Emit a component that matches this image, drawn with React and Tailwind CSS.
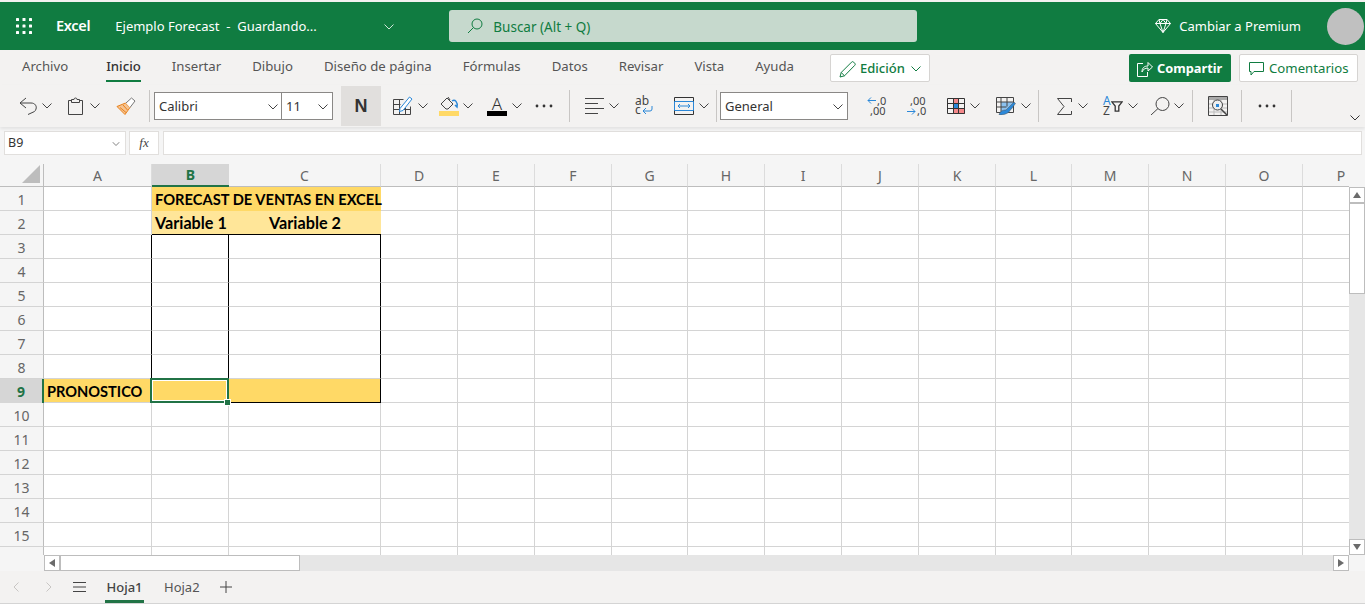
const columns = ["A", "B", "C", "D", "E", "F", "G", "H", "I", "J", "K", "L", "M", "N", "O", "P"];
const rows = [1, 2, 3, 4, 5, 6, 7, 8, 9, 10, 11, 12, 13, 14, 15, 16];
const tabs = ["Archivo", "Inicio", "Insertar", "Dibujo", "Diseño de página", "Fórmulas", "Datos", "Revisar", "Vista", "Ayuda"];

function Chevron({ className = "", color = "#444" }) {
  return (
    <svg width="10" height="6" viewBox="0 0 10 6" className={className} fill="none" stroke={color} strokeWidth="1">
      <path d="M0.5 0.5 5 5l4.500-4.500" />
    </svg>
  );
}

function Dots({ className = "" }) {
  return (
    <svg width="18" height="4" viewBox="0 0 18 4" className={className} fill="#333">
      <circle cx="2" cy="2" r="1.400" />
      <circle cx="9" cy="2" r="1.400" />
      <circle cx="16" cy="2" r="1.400" />
    </svg>
  );
}

function Sep({ className = "" }) {
  return <div className={`w-px h-8 bg-[#c8c6c4] ${className}`} />;
}

function Waffle() {
  const spots = [1.5, 8, 14.5];
  return (
    <svg width="16" height="16" viewBox="0 0 16 16" fill="#fff">
      {spots.map((y) => spots.map((x) => <rect key={`${x}-${y}`} x={x - 1.5} y={y - 1.5} width="3" height="3" rx="0.6" />))}
    </svg>
  );
}

function Icon({ children, w = 20, h = 20, className = "" }) {
  return (
    <svg width={w} height={h} viewBox={`0 0 ${w} ${h}`} fill="none" className={className}>
      {children}
    </svg>
  );
}

function Cell({ col, row }) {
  const inTable = col === "B" || col === "C";
  let cls = "bg-white";
  if (row === 1 && inTable) cls = "bg-[#ffd966]";
  if (row === 2 && inTable) cls = "bg-[#ffe699]";
  if (row === 9 && (col === "A" || inTable)) cls = "bg-[#ffd966]";

  let border = "border-r border-b border-[#d4d4d4]";
  if (row === 1 && col === "B") border = "border-b border-[#ffd966]";
  if (row === 1 && col === "C") border = "border-r border-b border-[#ffd966]";
  if (row === 2 && col === "B") border = "border-b border-black";
  if (row === 2 && col === "C") border = "border-b border-black";
  if (row > 2 && row < 9 && inTable) border = "border-r border-b border-r-black border-b-[#d4d4d4]";
  if (row === 9 && inTable) border = "border-r border-b border-black";
  if (row > 2 && row < 10 && col === "A") border = "border-r border-b border-r-black border-b-[#d4d4d4]";

  let text = null;
  if (row === 1 && col === "B") text = <span className="absolute left-[3px] top-[1px] whitespace-nowrap z-10 text-[14.7px]">FORECAST DE VENTAS EN EXCEL</span>;
  if (row === 2 && col === "B") text = <span className="absolute left-[3px] top-[1px] whitespace-nowrap text-[16.2px]">Variable 1</span>;
  if (row === 2 && col === "C") text = <span className="block text-center pt-[1px] whitespace-nowrap text-[16.2px]">Variable 2</span>;
  if (row === 9 && col === "A") text = <span className="absolute left-[3px] top-[2px] whitespace-nowrap text-[14.6px]">PRONOSTICO</span>;

  return (
    <div className={`relative h-6 ${cls} ${border} font-['Lato',sans-serif] font-bold leading-[22px] text-black`}>
      {text}
      {row === 9 && col === "B" && (
        <>
          <div className="absolute -left-[2px] -top-px -right-px -bottom-px border-2 border-[#217346] z-20">
            <div className="w-full h-full border border-white" />
          </div>
          <div className="absolute -right-[3px] -bottom-[4px] w-[7px] h-[7px] bg-[#217346] border border-white z-30" />
        </>
      )}
    </div>
  );
}

function Sheet() {
  return (
    <div className="w-[1349px] h-[391px] overflow-hidden">
      <div className="grid grid-cols-[44px_108px_77px_152px_77px_77px_77px_76px_77px_77px_77px_77px_76px_77px_77px_77px_77px] w-[1380px]">
        <div className="h-[23px] bg-[#f5f5f5] border-r border-b border-[#bdbdbd] flex items-end justify-end pr-[3px] pb-[3px]">
          <svg width="18" height="18" viewBox="0 0 18 18"><path d="M18 0v18H0z" fill="#bdbdbd" /></svg>
        </div>
        {columns.map((c) => (
          <div
            key={c}
            className={
              c === "B"
                ? "h-[23px] bg-[#d6d6d6] border-b-2 border-[#217346] flex items-center justify-center text-[14px] font-bold text-[#217346]"
                : "h-[23px] bg-[#f5f5f5] border-r border-b border-r-[#dcdcdc] border-b-[#bdbdbd] flex items-center justify-center text-[14px] text-[#666]"
            }
          >
            {c}
          </div>
        ))}
        {rows.map((r) => (
          <div key={r} className="contents">
            <div
              className={
                r === 9
                  ? "h-6 pt-[1px] bg-[#d6d6d6] border-r-2 border-[#217346] flex items-center justify-center text-[14px] font-bold text-[#217346]"
                  : "h-6 pt-[1px] bg-[#f5f5f5] border-r border-b border-r-[#bdbdbd] border-b-[#d4d4d4] flex items-center justify-center text-[14px] text-[#666]"
              }
            >
              {r}
            </div>
            {columns.map((c) => (
              <Cell key={c} col={c} row={r} />
            ))}
          </div>
        ))}
      </div>
    </div>
  );
}

function ScrollButton({ d, className = "" }) {
  return (
    <div className={`w-4 h-4 bg-white border border-[#bdbdbd] flex items-center justify-center ${className}`}>
      <svg width="10" height="10" viewBox="0 0 10 10"><path d={d} fill="#6b6b6b" /></svg>
    </div>
  );
}

export default function App() {
  return (
    <div className="w-[1365px] h-[607px] overflow-hidden bg-white font-['Noto_Sans',sans-serif] text-[#444]">
      <div className="h-[2px] bg-[#f3f2f1]" />

      {/* title bar */}
      <div className="h-[48px] bg-[#107c41] flex items-center text-white">
        <div className="ml-4"><Waffle /></div>
        <span className="ml-6 text-[14.5px] font-semibold tracking-[-0.3px]">Excel</span>
        <span className="ml-[25px] mt-[2px] w-[269px] text-[13px] whitespace-nowrap">Ejemplo Forecast&nbsp; -&nbsp; Guardando...</span>
        <Chevron color="#cfe5d8" className="mt-[2px]" />
        <div className="ml-[55px] w-[468px] h-8 rounded-[3px] bg-[#c6d9cd] flex items-center">
          <svg width="16" height="16" viewBox="0 0 16 16" fill="none" stroke="#107c41" strokeWidth="1" className="ml-[18px]">
            <circle cx="10" cy="6" r="5" />
            <path d="M6.500 9.500 1 15" />
          </svg>
          <span className="ml-[10px] mt-[2px] text-[13.5px] text-[#107c41]">Buscar (Alt + Q)</span>
        </div>
        <svg width="16" height="14" viewBox="0 0 16 14" fill="none" stroke="#fff" strokeWidth="1" className="ml-[238px]">
          <path d="M4 .5h8l3.500 4L8 13.500.5 4.500zM.5 4.500h15M5 4.500 8 13.500l3-9M4 .5l1 4 3-4 3 4 1-4" />
        </svg>
        <span className="ml-2 mt-[2px] w-[148px] text-[13px] whitespace-nowrap">Cambiar a Premium</span>
        <div className="w-[37px] h-[37px] rounded-full bg-[#c0c0c0]" />
      </div>

      {/* ribbon tabs */}
      <div className="h-[35px] bg-[#f3f2f1] flex items-center pl-[22px]">
        <div className="flex gap-[31px] w-[808px] pb-[1px]">
          {tabs.map((t) => (
            <div key={t} className={t === "Inicio" ? "relative ml-[7px] text-[13.2px] whitespace-nowrap text-[#333] font-medium" : "text-[13.2px] whitespace-nowrap text-[#555]"}>
              {t}
              {t === "Inicio" && <div className="absolute left-0 right-0 -bottom-[5px] h-[2px] bg-[#107c41]" />}
            </div>
          ))}
        </div>
        <div className="w-[100px] h-[28px] mt-[1px] pt-[2px] rounded-[2px] bg-white border border-[#d6d4d2] flex items-center pl-2 text-[13px] font-medium text-[#107c41]">
          <svg width="17" height="17" viewBox="0 0 17 17" fill="none" stroke="#107c41" strokeWidth="1">
            <path d="M1 16l1.200-4.500L12.500 1.200a1.500 1.500 0 0 1 2.200 0l1 1a1.500 1.500 0 0 1 0 2.200L5.500 14.800zM2.200 11.500l3.300 3.300" />
          </svg>
          <span className="ml-[4px]">Edición</span>
          <Chevron color="#107c41" className="ml-[6px]" />
        </div>
        <div className="ml-[199px] w-[102px] h-[28px] mt-[1px] pt-[2px] rounded-[2px] bg-[#107c41] flex items-center pl-2 text-[12.8px] font-bold text-white">
          <svg width="16" height="16" viewBox="0 0 16 16" fill="none" stroke="#fff" strokeWidth="1">
            <path d="M6 2.500H.5v13h10V11M5 11c0-4 2-6 6-6V1.500L15.500 6 11 10V7C8 7 6 8.500 5 11z" />
          </svg>
          <span className="ml-1">Compartir</span>
        </div>
        <div className="ml-2 w-[119px] h-[28px] mt-[1px] pt-[2px] rounded-[2px] bg-white border border-[#d6d4d2] flex items-center pl-[9px] text-[13.2px] text-[#107c41]">
          <svg width="15" height="14" viewBox="0 0 15 14" fill="none" stroke="#107c41" strokeWidth="1">
            <path d="M.5.500h14v9H5L2 13V9.500H.5z" />
          </svg>
          <span className="ml-[5px] whitespace-nowrap">Comentarios</span>
        </div>
      </div>

      {/* toolbar */}
      <div className="relative h-[42px] bg-[#f3f2f1] flex items-center pl-[19px] shadow-[0_2px_3px_rgba(0,0,0,0.08)]">
        <Icon w={18} h={18}>
          <path d="M7 1 1 6l6 5M1 6h11c4 0 6 3 5 6-.5 1.500-1 2-1.500 2.500L9 17.500" stroke="#444" />
        </Icon>
        <Chevron className="ml-[5px]" />
        <Icon w={16} h={18} className="ml-4">
          <path d="M3.500 3.500H.5v14h14v-14h-3M3.500 5.500v-3h2.500a1.500 1.500 0 0 1 3 0h2.500v3z" stroke="#444" />
        </Icon>
        <Chevron className="ml-[6px]" />
        <Icon w={20} h={18} className="ml-4">
          <path d="M1 9.500 9.500 6l4.500 4.500-5 7z" fill="#f6c391" stroke="#e8811a" />
          <path d="M4 10.500l6 5M7 8l4.500 5" stroke="#e8811a" />
          <path d="M10 6l5.500-5 3.500 3-5 6.500" stroke="#777" fill="#fff" />
        </Icon>
        <Sep className="ml-[13px]" />

        <div className="ml-1 w-[128px] h-7 pt-[2px] bg-white border border-[#8a8886] flex items-center justify-between pl-1 pr-[3px] text-[13px] text-[#333]">
          <span>Calibri</span>
          <Chevron />
        </div>
        <div className="w-[52px] h-7 pt-[2px] -ml-px bg-white border border-[#8a8886] flex items-center justify-between pl-1 pr-[4px] text-[13px] text-[#333]">
          <span>11</span>
          <Chevron />
        </div>
        <div className="ml-2 w-10 h-10 bg-[#e1dfdd] flex items-center justify-center font-['Liberation_Sans',sans-serif] font-bold text-[18px] text-[#333]">N</div>

        <Icon w={20} h={20} className="ml-[12px]">
          <path d="M.5 3.500h10M.5 3.500v15h17v-8M6.500 3.500v15M12.500 12v6.500M.5 8.500h7M.5 13.500h17" stroke="#444" />
          <path d="M7 12.500 16.500 1 19 3 10 14.500l-3.500 1z" fill="#fff" stroke="#2b88d8" />
        </Icon>
        <Chevron className="ml-[5px]" />
        <div className="ml-[11px] w-5 flex flex-col items-center">
          <Icon w={20} h={15}>
            <path d="M2 8 8 2l6 6-5 5H7zM9 1l2 3" stroke="#444" />
            <path d="M13 5c3-2 6 1 5 6l-2-2" stroke="#2b88d8" strokeWidth="1.500" />
          </Icon>
          <div className="w-5 h-[5px] bg-[#ffd966]" />
        </div>
        <Chevron className="ml-1" />
        <div className="ml-[14px] w-5 flex flex-col items-center">
          <span className="text-[17px] leading-[15px] font-light text-[#333]">A</span>
          <div className="w-5 h-[5px] bg-black" />
        </div>
        <Chevron className="ml-[5px]" />
        <Dots className="ml-[13px]" />
        <Sep className="ml-4" />

        <Icon w={20} h={18} className="ml-[15px]">
          <path d="M0 1.500h19M0 6.500h13M0 11.500h19M0 16.500h13" stroke="#444" />
        </Icon>
        <Chevron className="ml-1" />
        <div className="ml-[16px] w-[18px] h-[20px] relative text-[12px] leading-[9px] text-[#444]">
          <div>ab</div>
          <div>c</div>
          <svg width="11" height="9" viewBox="0 0 11 9" fill="none" stroke="#2b88d8" className="absolute right-0 bottom-[1px]">
            <path d="M10 0v3a2 2 0 0 1-2 2H1M4 2 1 5l3 3" />
          </svg>
        </div>
        <Icon w={20} h={18} className="ml-[21px]">
          <path d="M.5.500h19v17H.5zM.5 4.500h19M.5 13.500h19" stroke="#333" />
          <path d="M.5 4.500h19v9H.5zM4 9h12M6 7 4 9l2 2M14 7l2 2-2 2" stroke="#2b88d8" />
        </Icon>
        <Chevron className="ml-[5px]" />
        <Sep className="ml-[7px]" />

        <div className="ml-[3px] w-[128px] h-7 pt-[2px] bg-white border border-[#8a8886] flex items-center justify-between pl-1 pr-1 text-[13px] text-[#333]">
          <span>General</span>
          <Chevron />
        </div>
        <div className="ml-[19px] w-[20px] relative h-5 text-[11px] leading-[10px] text-[#444]">
          <div className="pl-[10px]">,0</div>
          <div className="pl-[3px]">,00</div>
          <svg width="9" height="7" viewBox="0 0 9 7" fill="none" stroke="#2b88d8" className="absolute left-0 top-[1px]">
            <path d="M9 3.500H1M4 .5l-3 3 3 3" />
          </svg>
        </div>
        <div className="ml-[20px] w-[20px] relative h-5 text-[11px] leading-[10px] text-[#444]">
          <div className="pl-[3px]">,00</div>
          <div className="pl-[10px]">,0</div>
          <svg width="9" height="7" viewBox="0 0 9 7" fill="none" stroke="#2b88d8" className="absolute left-0 bottom-[1px]">
            <path d="M0 3.500h8M5 .5l3 3-3 3" />
          </svg>
        </div>
        <Icon w={18} h={16} className="ml-[20px]">
          <path d="M6.500.5h5v5h-5zM6.500 10.500h11v5h-11z" fill="#f4888a" stroke="#d13438" />
          <path d="M6.500 5.500h5v5h-5z" fill="#2b88d8" />
          <path d="M.5.500h17v15H.5zM6.500.5v15M11.500.5v15M.5 5.500h17M.5 10.500h17" stroke="#333" />
        </Icon>
        <Chevron className="ml-[5px]" />
        <Icon w={20} h={18} className="ml-[16px]">
          <path d="M5 5h12v6l-6 4H5z" fill="#8cc2f0" />
          <path d="M.5.500h17v15H.5zM5 .5v15M11 .5v9M.5 5h17M.5 10h10" stroke="#444" />
          <path d="M3 18c1-4 4-5 7-5l8-8 1.500 1.500-7 9c-3 2-6 2.500-9.500 2.500z" fill="#2b88d8" stroke="#555" strokeWidth="0.5" />
        </Icon>
        <Chevron className="ml-[5px]" />
        <Sep className="ml-[7px]" />

        <Icon w={15} h={17} className="ml-[18px]">
          <path d="M14.500 4V.5H.5L7 8.500.5 16.500h14V13" stroke="#444" />
        </Icon>
        <Chevron className="ml-[6px]" />
        <div className="ml-[15px] w-[20px] h-[20px] relative text-[12px] leading-[10px]">
          <div className="text-[#2b88d8]">A</div>
          <div className="text-[#444]">Z</div>
          <svg width="12" height="11" viewBox="0 0 12 11" fill="none" stroke="#333" strokeWidth="1.300" className="absolute right-0 top-[5px]">
            <path d="M.8.800h10.400L7.800 5v5.200H4.200V5z" />
          </svg>
        </div>
        <Chevron className="ml-[5px]" />
        <Icon w={20} h={18} className="ml-[12px]">
          <circle cx="12.500" cy="7" r="6.500" stroke="#444" />
          <path d="M8 11.500 1 18" stroke="#444" />
        </Icon>
        <Chevron className="ml-1" />
        <Sep className="ml-2" />

        <Icon w={20} h={20} className="ml-[15px]">
          <path d="M.5.500h19v19H.5z" stroke="#444" />
          <path d="M1 1h18v3H1z" fill="#aaa" />
          <path d="M1 8h18M1 12h18M1 16h18M6 4v15M13 4v15" stroke="#bbb" />
          <circle cx="9.500" cy="9" r="5" fill="#eee" stroke="#444" />
          <path d="M13 13l6 6" stroke="#444" strokeWidth="1.500" />
          <path d="M8 8h3v3H8z" fill="#2b88d8" />
        </Icon>
        <Sep className="ml-[13px]" />
        <Dots className="ml-4" />
        <Sep className="ml-[15px]" />
        <Chevron className="absolute right-[5px] bottom-[6px]" color="#333" />
      </div>

      {/* formula bar */}
      <div className="h-[37px] bg-[#f5f5f5] flex items-center pl-1 pr-[3px] pb-[5px] gap-[3px]">
        <div className="w-[122px] h-[24px] pt-[1px] bg-white border border-[#e1dfdd] flex items-center justify-between pl-[3px] pr-[4px] text-[12.5px] text-[#333]">
          <span>B9</span>
          <Chevron className="scale-75" color="#555" />
        </div>
        <div className="w-[30px] h-[24px] bg-white border border-[#e1dfdd] flex items-center justify-center font-['Liberation_Serif',serif] italic text-[13px] text-[#444]">
          fx
        </div>
        <div className="ml-[1px] flex-1 h-[24px] bg-white border border-[#e1dfdd]" />
      </div>

      {/* grid + vertical scrollbar */}
      <div className="flex">
        <Sheet />
        <div className="w-4 flex flex-col h-[391px]">
          <div className="h-[23px] bg-[#f5f5f5] shrink-0" />
          <ScrollButton d="M5 2 9 8H1z" />
          <div className="h-[91px] bg-white border border-[#bdbdbd] shrink-0" />
          <div className="flex-1 bg-[#e6e6e6]" />
          <ScrollButton d="M1 2h8L5 8z" />
        </div>
      </div>

      {/* horizontal scrollbar */}
      <div className="h-4 flex bg-[#f5f5f5]">
        <div className="w-11" />
        <ScrollButton d="M8 1v8L2 5z" />
        <div className="w-[240px] bg-white border border-[#bdbdbd]" />
        <div className="w-[1033px] bg-[#e6e6e6]" />
        <ScrollButton d="M2 1v8l6-4z" />
      </div>

      {/* sheet tabs */}
      <div className="h-[33px] bg-[#f3f2f1] border-b border-[#d4d4d4] flex items-center text-[13px]">
        <svg width="6" height="10" viewBox="0 0 6 10" fill="none" stroke="#c8c6c4" className="ml-[13px]"><path d="M5.500.5 1 5l4.500 4.500" /></svg>
        <svg width="6" height="10" viewBox="0 0 6 10" fill="none" stroke="#c8c6c4" className="ml-[27px]"><path d="M.5.5 5 5 .5 9.500" /></svg>
        <svg width="13" height="10" viewBox="0 0 13 10" fill="none" stroke="#444" className="ml-[21px]"><path d="M0 .5h13M0 5h13M0 9.500h13" /></svg>
        <div className="relative ml-[19px] h-full pt-[2px] flex items-center justify-center w-[39px] font-medium text-[#444]">
          Hoja1
          <div className="absolute left-0 right-0 bottom-0 h-[3px] bg-[#217346]" />
        </div>
        <span className="ml-5 mt-[2px] text-[#555]">Hoja2</span>
        <svg width="12" height="12" viewBox="0 0 12 12" fill="none" stroke="#444" className="ml-5"><path d="M6 0v12M0 6h12" /></svg>
      </div>
    </div>
  );
}
